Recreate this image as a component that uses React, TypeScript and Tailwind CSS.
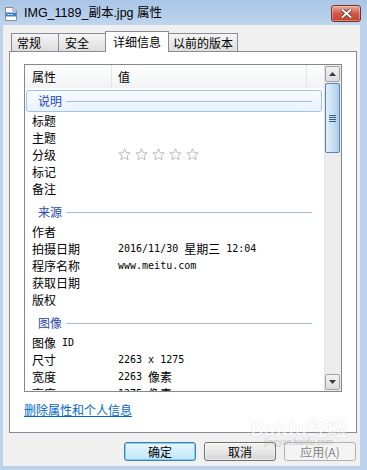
import React from "react";

const cjk = "font-['Noto_Sans_CJK_SC',sans-serif]";
const mono = "font-['DejaVu_Sans_Mono','Noto_Sans_CJK_SC',monospace] text-[10px]";

function Row({ label, children }: { label: React.ReactNode; children?: React.ReactNode }) {
  return (
    <div className="flex h-[17px] shrink-0 items-center leading-none">
      <div className="w-[93px] shrink-0 pl-[7px]">{label}</div>
      <div className="flex items-center">{children}</div>
    </div>
  );
}

function Group({ title, active, first }: { title: string; active?: boolean; first?: boolean }) {
  return (
    <div className={first ? "mt-[2px] shrink-0" : "mt-[4px] shrink-0"}>
      <div
        className={
          active
            ? "ml-[1px] mr-[2px] flex h-[22px] items-center rounded-[3px] border border-[#9ec4ee] bg-gradient-to-b from-[#f7fbff] to-[#e9f2fd] pl-[11px] pr-[9px]"
            : "ml-[1px] mr-[2px] flex h-[22px] items-center rounded-[3px] border border-transparent pl-[11px] pr-[9px]"
        }
      >
        <span className="leading-none text-[#2747b3]">{title}</span>
        <div className="ml-[4px] h-px flex-1 bg-[#a7bbe3]" />
      </div>
    </div>
  );
}

function Star() {
  return (
    <svg width="13" height="13" viewBox="0 0 13 13">
      <path
        d="M6.5 0.8 L8.1 4.6 L12.2 4.9 L9.1 7.6 L10.1 11.7 L6.5 9.5 L2.9 11.7 L3.9 7.6 L0.8 4.9 L4.9 4.6 Z"
        fill="#fdfdfd"
        stroke="#b4b4b4"
        strokeWidth="0.9"
        strokeLinejoin="round"
      />
    </svg>
  );
}

function Arrow({ down }: { down?: boolean }) {
  return (
    <svg width="7" height="4" viewBox="0 0 7 4">
      <path d={down ? "M0 0 L7 0 L3.5 4 Z" : "M0 4 L7 4 L3.5 0 Z"} fill="#3b3b3b" />
    </svg>
  );
}

function FileIcon() {
  return (
    <svg width="12" height="14" viewBox="0 0 12 14">
      <path d="M0.5 0.5 H8 L11.5 4 V13.5 H0.5 Z" fill="#ffffff" stroke="#8c8c8c" />
      <path d="M8 0.5 V4 H11.5" fill="#e8e8e8" stroke="#8c8c8c" />
      <rect x="1" y="5.5" width="10" height="4" fill="#3b7fd0" />
      <rect x="2.5" y="7" width="2" height="1" fill="#ffffff" />
      <rect x="5.5" y="7" width="2" height="1" fill="#ffffff" />
    </svg>
  );
}

export default function App() {
  return (
    <div className={`relative flex h-[470px] w-[367px] flex-col overflow-hidden bg-[#bcd2ec] text-[12px] text-black ${cjk}`}>
      {/* title bar */}
      <div className="flex h-[25px] shrink-0 bg-gradient-to-b from-[#a9c5e6] to-[#bfd4ee]">
        <div className="ml-[5px] mt-[7px]">
          <FileIcon />
        </div>
        <div className="ml-[7px] mt-[6px] text-[12.5px] leading-[15px] font-['Liberation_Sans','Noto_Sans_CJK_SC',sans-serif]">
          IMG_1189_副本.jpg 属性
        </div>
        <div className="ml-auto mr-[6px] mt-[5px] flex h-[17px] w-[30px] items-center justify-center rounded-[3px] border border-[#7a2e28] bg-gradient-to-b from-[#e9a999] via-[#d05a45] to-[#c4432d] shadow-[inset_0_0_0_1px_rgba(255,255,255,0.35)]">
          <svg width="11" height="9" viewBox="0 0 11 9">
            <path d="M1.5 1 L9.5 8 M9.5 1 L1.5 8" stroke="#5a2a24" strokeWidth="3.4" strokeLinecap="square" />
            <path d="M1.5 1 L9.5 8 M9.5 1 L1.5 8" stroke="#ffffff" strokeWidth="2" strokeLinecap="square" />
          </svg>
        </div>
      </div>

      {/* client area */}
      <div className="mb-[4px] ml-[3px] mr-[7px] flex flex-1 flex-col bg-[#f0f0f0]">
        {/* tabs */}
        <div className="relative z-10 ml-[8px] mt-[6px] flex h-[20px] items-end">
          <div className="h-[18px] w-[48px] border border-b-0 border-[#898c95] bg-gradient-to-b from-[#f5f5f5] to-[#dedede] pl-[5px] leading-[17px]">常规</div>
          <div className="-ml-px h-[18px] w-[48px] border border-b-0 border-[#898c95] bg-gradient-to-b from-[#f5f5f5] to-[#dedede] pl-[6px] leading-[17px]">安全</div>
          <div className="-mb-px -ml-px h-[21px] w-[64px] border border-b-0 border-[#898c95] bg-white pl-[7px] leading-[19px]">详细信息</div>
          <div className="-ml-px h-[18px] w-[70px] border border-b-0 border-[#898c95] bg-gradient-to-b from-[#f5f5f5] to-[#dedede] pl-[4px] leading-[17px]">以前的版本</div>
        </div>

        {/* tab page */}
        <div className="ml-[6px] mr-[3px] flex h-[382px] flex-col border border-[#898c95] bg-white">
          <div className="ml-[14px] mt-[12px] flex h-[328px] w-[318px] border border-[#828790] bg-white">
            {/* list */}
            <div className="flex flex-1 flex-col overflow-hidden">
              <div className="flex h-[23px] shrink-0 items-center bg-gradient-to-b from-white to-[#f1f2f4]">
                <div className="flex h-full w-[87px] items-center border-r border-[#e3e5e8] pl-[7px]">属性</div>
                <div className="flex h-full w-[195px] items-center border-r border-[#e3e5e8] pl-[6px]">值</div>
              </div>

              <Group title="说明" active first />
              <Row label="标题" />
              <Row label="主题" />
              <Row label="分级">
                <div className="flex gap-[4px]">
                  <Star />
                  <Star />
                  <Star />
                  <Star />
                  <Star />
                </div>
              </Row>
              <Row label="标记" />
              <Row label="备注" />

              <Group title="来源" />
              <Row label="作者" />
              <Row label="拍摄日期">
                <span className={mono}>2016/11/30&nbsp;</span>
                <span>星期三</span>
                <span className={mono}>&nbsp;12:04</span>
              </Row>
              <Row label="程序名称">
                <span className={mono}>www.meitu.com</span>
              </Row>
              <Row label="获取日期" />
              <Row label="版权" />

              <Group title="图像" />
              <Row
                label={
                  <span className="flex items-center">
                    图像<span className={mono}>&nbsp;ID</span>
                  </span>
                }
              />
              <Row label="尺寸">
                <span className={mono}>2263 x 1275</span>
              </Row>
              <Row label="宽度">
                <span className={mono}>2263&nbsp;</span>
                <span>像素</span>
              </Row>
              <Row label="高度">
                <span className={mono}>1275&nbsp;</span>
                <span>像素</span>
              </Row>
            </div>

            {/* scrollbar */}
            <div className="flex w-[17px] shrink-0 flex-col border-l border-[#e2e2e2] bg-[#ececec] p-[1px] pl-0">
              <div className="flex h-[16px] w-[15px] items-center justify-center rounded-[2px] border border-[#a3a3a3] bg-gradient-to-b from-[#f4f4f4] to-[#dcdcdc]">
                <Arrow />
              </div>
              <div className="mt-[1px] flex h-[70px] w-[15px] items-center justify-center rounded-[2px] border border-[#5d84aa] bg-gradient-to-r from-[#e2eef9] via-[#c8e0f3] to-[#a9cce8]">
                <div className="flex flex-col gap-[1px]">
                  <div className="h-px w-[7px] bg-[#3d5a78]" />
                  <div className="h-px w-[7px] bg-[#3d5a78]" />
                  <div className="h-px w-[7px] bg-[#3d5a78]" />
                  <div className="h-px w-[7px] bg-[#3d5a78]" />
                </div>
              </div>
              <div className="mt-auto flex h-[16px] w-[15px] items-center justify-center rounded-[2px] border border-[#a3a3a3] bg-gradient-to-b from-[#f4f4f4] to-[#dcdcdc]">
                <Arrow down />
              </div>
            </div>
          </div>

          <div className="ml-[14px] mt-[10px] leading-[16px] text-[#0066cc] underline">删除属性和个人信息</div>
        </div>

        {/* buttons */}
        <div className="mt-[9px] flex justify-end gap-[8px] pr-[4px]">
          <div className="flex h-[19px] w-[72px] items-center justify-center rounded-[3px] border border-[#3c7fb1] bg-gradient-to-b from-[#eaf6fd] to-[#bee6fd] shadow-[inset_0_0_0_1px_#7fd0f7] leading-none">
            确定
          </div>
          <div className="flex h-[19px] w-[72px] items-center justify-center rounded-[3px] border border-[#707070] bg-gradient-to-b from-[#f3f3f3] via-[#e6e6e6] to-[#d3d3d3] shadow-[inset_0_0_0_1px_rgba(255,255,255,0.6)] leading-none">
            取消
          </div>
          <div className="flex h-[19px] w-[72px] items-center justify-center rounded-[3px] border border-[#adb2b5] bg-[#f4f4f4] leading-none text-[#838383]">
            应用(A)
          </div>
        </div>
      </div>

      {/* watermark */}
      <div className="pointer-events-none absolute left-[250px] top-[418px] flex flex-col items-center opacity-50">
        <div className="text-[20px] font-bold leading-none text-white [text-shadow:0_0_1px_#9a9a9a]">Baidu经验</div>
        <div className="text-[8px] leading-none text-[#9a9a9a]">jingyan.baidu.com</div>
      </div>
    </div>
  );
}
